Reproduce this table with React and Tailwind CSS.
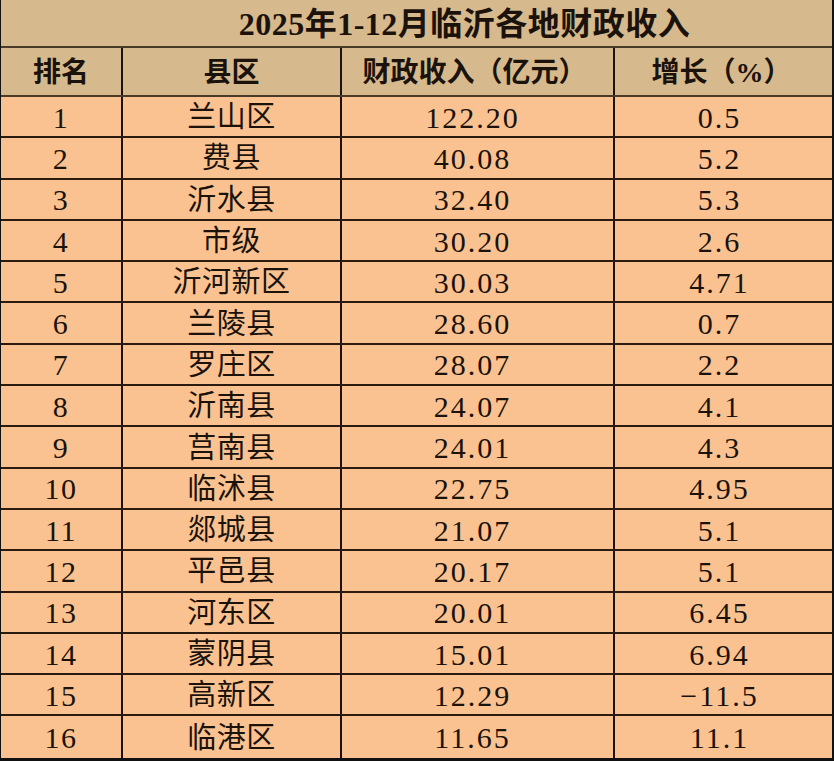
import React from "react";

const rows = [
  ["1", "兰山区", "122.20", "0.5"],
  ["2", "费县", "40.08", "5.2"],
  ["3", "沂水县", "32.40", "5.3"],
  ["4", "市级", "30.20", "2.6"],
  ["5", "沂河新区", "30.03", "4.71"],
  ["6", "兰陵县", "28.60", "0.7"],
  ["7", "罗庄区", "28.07", "2.2"],
  ["8", "沂南县", "24.07", "4.1"],
  ["9", "莒南县", "24.01", "4.3"],
  ["10", "临沭县", "22.75", "4.95"],
  ["11", "郯城县", "21.07", "5.1"],
  ["12", "平邑县", "20.17", "5.1"],
  ["13", "河东区", "20.01", "6.45"],
  ["14", "蒙阴县", "15.01", "6.94"],
  ["15", "高新区", "12.29", "-11.5"],
  ["16", "临港区", "11.65", "11.1"],
];

const font = { fontFamily: '"Liberation Serif", "Noto Sans CJK SC", serif' };

export default function App() {
  return (
    <div
      className="w-[834px] h-[761px] bg-[#fbc291] text-[#1a120b] overflow-hidden border-r-2 border-b-[3px] border-l border-[#111]"
      style={font}
    >
      <div className="h-[48px] bg-[#d6b98c] border-b-2 border-[#4a3a28] flex items-center justify-center pl-[96px]">
        <span className="text-[32px] font-bold leading-none tracking-[0.5px] pt-[1px]">
          2025年1-12月临沂各地财政收入
        </span>
      </div>
      <div className="h-[49px] bg-[#d6b98c] border-b-2 border-[#4a3a28] grid grid-cols-[122px_219px_273px_1fr] text-[28px] font-bold leading-none">
        <div className="flex items-center justify-center border-r-2 border-[#1a120b] pt-[3px]">排名</div>
        <div className="flex items-center justify-center border-r-2 border-[#1a120b] pt-[3px]">县区</div>
        <div className="flex items-center justify-center border-r-2 border-[#1a120b] pr-[6px] pt-[3px]">财政收入（亿元）</div>
        <div className="flex items-center justify-center pr-[4px] pt-[3px]">增长（%）</div>
      </div>
      {rows.map((r, i) => (
        <div
          key={i}
          className={
            "h-[41.3px] grid grid-cols-[122px_219px_273px_1fr] leading-none " +
            (i < rows.length - 1 ? "border-b-2 border-[#2a1a10]" : "")
          }
        >
          <div className="flex items-center justify-center border-r-2 border-[#1a120b] text-[30px] tracking-[1.5px] pt-[2px]">
            {r[0]}
          </div>
          <div className="flex items-center justify-center border-r-2 border-[#1a120b] text-[29px] tracking-[0.5px] pt-[2px]">
            {r[1]}
          </div>
          <div className="flex items-center justify-center border-r-2 border-[#1a120b] text-[30px] tracking-[2px] pt-[2px] pr-[10px]">
            {r[2]}
          </div>
          <div className="flex items-center justify-center text-[30px] tracking-[2px] pt-[2px] pr-[8px]">
            {r[3] === "-11.5" ? "−11.5" : r[3]}
          </div>
        </div>
      ))}
    </div>
  );
}
